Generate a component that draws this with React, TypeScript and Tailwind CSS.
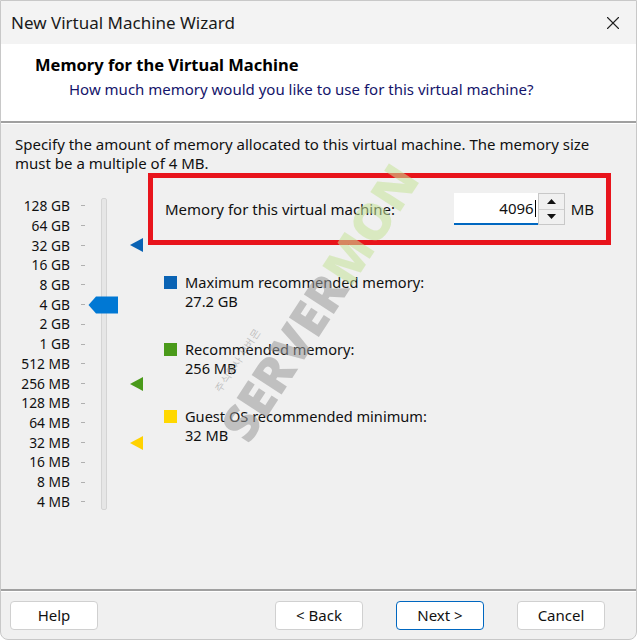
import { X } from "lucide-react";

const scale = [
  "128 GB",
  "64 GB",
  "32 GB",
  "16 GB",
  "8 GB",
  "4 GB",
  "2 GB",
  "1 GB",
  "512 MB",
  "256 MB",
  "128 MB",
  "64 MB",
  "32 MB",
  "16 MB",
  "8 MB",
  "4 MB",
];

const ROW = 19.73;
// centre of the first scale row, measured from the top of the slider column
const FIRST = 33;

function Marker({ index, color }: { index: number; color: string }) {
  return (
    <svg
      className="absolute left-[115px]"
      style={{ top: FIRST + index * ROW - 7 }}
      width="13"
      height="14"
      viewBox="0 0 13 14"
    >
      <polygon points="0,7 13,0 13,14" fill={color} />
    </svg>
  );
}

function Legend({
  color,
  label,
  value,
}: {
  color: string;
  label: string;
  value: string;
}) {
  return (
    <div className="flex gap-[8px]">
      <div className={`mt-[3px] h-[13px] w-[13px] ${color}`} />
      <div className="leading-[19px]">
        <div>{label}</div>
        <div>{value}</div>
      </div>
    </div>
  );
}

function WizardButton({
  children,
  primary,
}: {
  children: React.ReactNode;
  primary?: boolean;
}) {
  return (
    <button
      type="button"
      className={`h-[29px] w-[88px] rounded-[4px] border bg-white text-[15px] text-[#111] ${
        primary ? "border-[#0067c0]" : "border-[#d0d0d0]"
      }`}
    >
      {children}
    </button>
  );
}

export default function App() {
  return (
    <div
      className="relative flex h-[640px] w-[637px] flex-col overflow-hidden rounded-b-[8px] border border-[#c8c8c8] bg-[#f0f0f0] text-[#111]"
      style={{ fontFamily: '"Noto Sans", "Open Sans", sans-serif' }}
    >
      {/* title bar */}
      <div className="flex h-[43px] shrink-0 items-center justify-between bg-[#f3f3f3] pl-[10px] pr-[12px]">
        <span className="text-[17px] text-[#1a1a1a]">
          New Virtual Machine Wizard
        </span>
        <X className="h-[22px] w-[22px] text-[#222]" strokeWidth={1.2} />
      </div>

      {/* header */}
      <div className="h-[77px] shrink-0 bg-white pl-[34px] pt-[10px]">
        <div className="text-[16.5px] font-bold leading-[22px] text-black">
          Memory for the Virtual Machine
        </div>
        <div className="pl-[34px] pt-[3px] text-[15px] leading-[20px] text-[#14146a]">
          How much memory would you like to use for this virtual machine?
        </div>
      </div>
      <div className="h-[2px] shrink-0 bg-[#a0a0a0]" />
      <div className="h-px shrink-0 bg-white" />

      {/* body */}
      <div className="flex flex-1 flex-col px-[14px] pt-[11px] text-[15px]">
        <p className="leading-[19px]">
          Specify the amount of memory allocated to this virtual machine. The
          memory size
          <br />
          must be a multiple of 4 MB.
        </p>

        <div className="flex">
          {/* slider */}
          <div className="relative w-[133px] shrink-0">
            <div className="absolute left-[86px] top-[25px] h-[312px] w-[6px] rounded-[2px] border border-[#d4d4d4] bg-[#e6e6e6]" />
            <div style={{ paddingTop: FIRST - ROW / 2 }}>
              {scale.map((s) => (
                <div
                  key={s}
                  className="flex items-center"
                  style={{ height: ROW }}
                >
                  <span className="w-[55px] text-right text-[13.8px] leading-none">
                    {s}
                  </span>
                  <span className="ml-[11px] h-px w-[4px] bg-[#b0b0b0]" />
                </div>
              ))}
            </div>
            <svg
              className="absolute left-[73px]"
              style={{ top: FIRST + 5 * ROW - 9 }}
              width="31"
              height="18"
              viewBox="0 0 31 18"
            >
              <polygon
                points="0.5,9 8,0.5 30,0.5 30,17.5 8,17.5"
                fill="#0078d4"
              />
            </svg>
            <Marker index={2} color="#0a63b4" />
            <Marker index={9} color="#4a9a1a" />
            <Marker index={12} color="#ffd200" />
          </div>

          {/* right side */}
          <div className="flex flex-1 flex-col">
            <div className="mr-[11px] flex h-[72px] items-center border-[5px] border-[#e8141c] pl-[12px] pr-[12px]">
              <span className="flex-1">Memory for this virtual machine:</span>
              <div className="flex h-[32px] w-[84px] items-center justify-end border-b-2 border-[#0067c0] bg-white pr-[2px]">
                <span>4096</span>
                <span className="ml-[1px] h-[17px] w-px bg-black" />
              </div>
              <div className="flex h-[32px] w-[27px] flex-col border border-[#c8c8c8] bg-[#f0f0f0]">
                <div className="flex flex-1 items-center justify-center border-b border-[#d0d0d0]">
                  <svg width="9" height="5" viewBox="0 0 9 5">
                    <polygon points="0,5 4.5,0 9,5" fill="#111" />
                  </svg>
                </div>
                <div className="flex flex-1 items-center justify-center">
                  <svg width="9" height="5" viewBox="0 0 9 5">
                    <polygon points="0,0 9,0 4.5,5" fill="#111" />
                  </svg>
                </div>
              </div>
              <span className="ml-[6px]">MB</span>
            </div>

            <div className="flex flex-col gap-[29px] pl-[16px] pt-[28px] text-[14.6px]">
              <Legend
                color="bg-[#0a63b4]"
                label="Maximum recommended memory:"
                value="27.2 GB"
              />
              <Legend
                color="bg-[#4a9a1a]"
                label="Recommended memory:"
                value="256 MB"
              />
              <Legend
                color="bg-[#ffd800]"
                label="Guest OS recommended minimum:"
                value="32 MB"
              />
            </div>
          </div>
        </div>
      </div>

      {/* footer */}
      <div className="h-[2px] shrink-0 bg-[#a0a0a0]" />
      <div className="h-px shrink-0 bg-white" />
      <div className="flex h-[47px] shrink-0 items-start pl-[9px] pr-[31px] pt-[9px]">
        <WizardButton>Help</WizardButton>
        <div className="flex-1" />
        <div className="flex gap-[33px]">
          <WizardButton>&lt; Back</WizardButton>
          <WizardButton primary>Next &gt;</WizardButton>
          <WizardButton>Cancel</WizardButton>
        </div>
      </div>

      {/* watermark */}
      <div className="pointer-events-none absolute left-[148px] top-[276px] w-[340px] -rotate-[57deg] whitespace-nowrap text-center text-[50px] font-black leading-none opacity-55">
        <span className="text-[#9a9a9a]">SERVER</span>
        <span className="text-[#c6e39a]">MON</span>
      </div>
      <div className="pointer-events-none absolute left-[200px] top-[352px] -rotate-[57deg] whitespace-nowrap text-[10px] text-[#a8a8a8] opacity-70">
        주식회사 서버몬
      </div>
    </div>
  );
}
